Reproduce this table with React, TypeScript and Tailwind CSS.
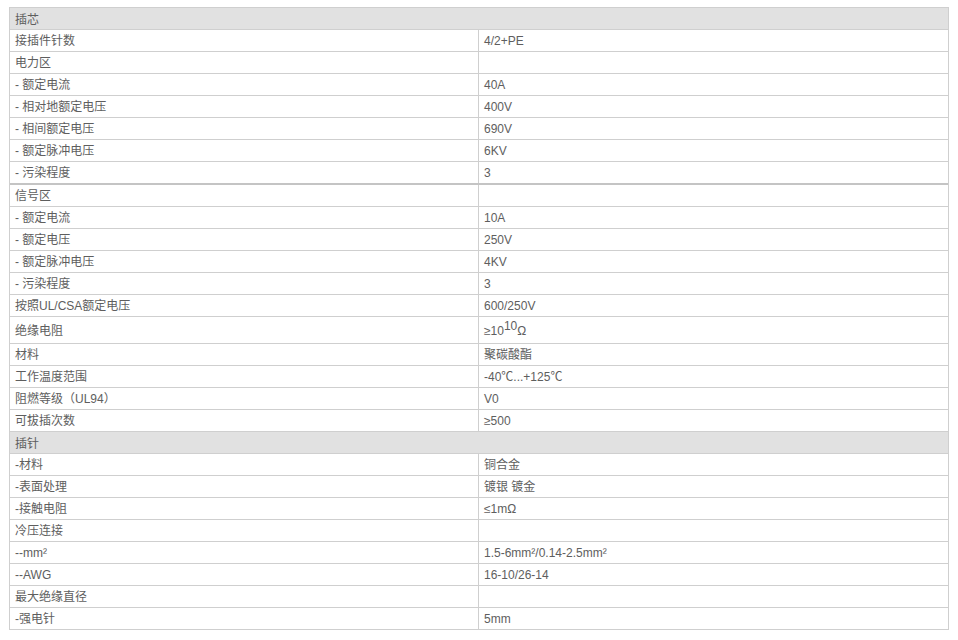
import React from "react";

type Row =
  | { kind: "head"; label: string }
  | { kind: "row"; label: string; value: React.ReactNode; tall?: boolean; thick?: boolean };

const rows: Row[] = [
  { kind: "head", label: "插芯" },
  { kind: "row", label: "接插件针数", value: "4/2+PE" },
  { kind: "row", label: "电力区", value: "" },
  { kind: "row", label: "- 额定电流", value: "40A" },
  { kind: "row", label: "- 相对地额定电压", value: "400V" },
  { kind: "row", label: "- 相间额定电压", value: "690V" },
  { kind: "row", label: "- 额定脉冲电压", value: "6KV" },
  { kind: "row", label: "- 污染程度", value: "3", thick: true },
  { kind: "row", label: "信号区", value: "" },
  { kind: "row", label: "- 额定电流", value: "10A" },
  { kind: "row", label: "- 额定电压", value: "250V" },
  { kind: "row", label: "- 额定脉冲电压", value: "4KV" },
  { kind: "row", label: "- 污染程度", value: "3" },
  { kind: "row", label: "按照UL/CSA额定电压", value: "600/250V" },
  {
    kind: "row",
    label: "绝缘电阻",
    tall: true,
    value: (
      <span>
        ≥10<span className="relative top-[-5px]">10</span>Ω
      </span>
    ),
  },
  { kind: "row", label: "材料", value: "聚碳酸酯" },
  { kind: "row", label: "工作温度范围", value: "-40℃...+125℃" },
  { kind: "row", label: "阻燃等级（UL94）", value: "V0" },
  { kind: "row", label: "可拔插次数", value: "≥500" },
  { kind: "head", label: "插针" },
  { kind: "row", label: "-材料", value: "铜合金" },
  { kind: "row", label: "-表面处理", value: "镀银 镀金" },
  { kind: "row", label: "-接触电阻", value: "≤1mΩ" },
  { kind: "row", label: "冷压连接", value: "" },
  { kind: "row", label: "--mm²", value: "1.5-6mm²/0.14-2.5mm²" },
  { kind: "row", label: "--AWG", value: "16-10/26-14" },
  { kind: "row", label: "最大绝缘直径", value: "" },
  { kind: "row", label: "-强电针", value: "5mm" },
];

export default function App() {
  return (
    <div
      className="w-[958px] h-[640px] bg-white pt-[7px] pl-[9px] text-[12px] text-[#5e5e5e]"
      style={{ fontFamily: '"Liberation Sans", Arial, "Noto Sans CJK SC", sans-serif' }}
    >
      <div className="w-[940px] border-t border-l border-r border-[#cfcfcf]">
        {rows.map((r, i) =>
          r.kind === "head" ? (
            <div
              key={i}
              className="h-[22px] bg-[#e1e1e1] border-b border-[#cfcfcf] pl-[5px] pt-[2px] flex items-center"
            >
              {r.label}
            </div>
          ) : (
            <div
              key={i}
              className={
                "flex " +
                (r.tall ? "h-[27px] " : r.thick ? "h-[23px] " : "h-[22px] ") +
                (r.thick ? "border-b-2 border-[#c4c4c4]" : "border-b border-[#cfcfcf]")
              }
            >
              <div className="w-[469px] border-r border-[#cfcfcf] pl-[5px] pt-[1px] flex items-center">
                {r.label}
              </div>
              <div className="flex-1 pl-[5px] pt-[1px] flex items-center">{r.value}</div>
            </div>
          )
        )}
      </div>
    </div>
  );
}
